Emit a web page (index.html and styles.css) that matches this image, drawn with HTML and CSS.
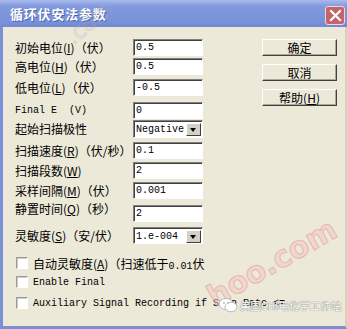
FILE: index.html
```html
<!DOCTYPE html>
<html lang="zh-CN">
<head>
    <meta charset="UTF-8">
    <meta name="viewport" content="width=device-width, initial-scale=1.0">
    <title>循环伏安法参数</title>
    <link rel="stylesheet" href="styles.css">
</head>
<body>
    <div class="window">
        <div class="titlebar">
            <span class="title">循环伏安法参数</span>
            <span class="close">
                <svg width="13" height="13" viewBox="0 0 13 13"><path d="M2 2 L11 11 M11 2 L2 11" stroke="#fff" stroke-width="2.2" stroke-linecap="square"/></svg>
            </span>
        </div>
        <div class="client">
            <div class="top">
                <div class="fields">
                    <span class="label">初始电位(<u>I</u>)（伏）</span>
                    <input class="field" type="text" value="0.5">
                    <span class="label">高电位(<u>H</u>)（伏）</span>
                    <input class="field" type="text" value="0.5">
                    <span class="label">低电位(<u>L</u>)（伏）</span>
                    <input class="field" type="text" value="-0.5">
                    <span class="label mono">Final E  (V)</span>
                    <input class="field" type="text" value="0">
                    <span class="label">起始扫描极性</span>
                    <div class="combo combo-tall"><span class="combo-text">Negative</span><span class="arrow"></span></div>
                    <span class="label">扫描速度(<u>R</u>)（伏/秒）</span>
                    <input class="field" type="text" value="0.1">
                    <span class="label">扫描段数(<u>W</u>)</span>
                    <input class="field" type="text" value="2">
                    <span class="label">采样间隔(<u>M</u>)（伏）</span>
                    <input class="field" type="text" value="0.001">
                    <span class="label label-up">静置时间(<u>Q</u>)（秒）</span>
                    <input class="field" type="text" value="2">
                    <span class="label">灵敏度(<u>S</u>)（安/伏）</span>
                    <div class="combo"><span class="combo-text">1.e-004</span><span class="arrow"></span></div>
                </div>
                <div class="buttons">
                    <button class="btn">确定</button>
                    <button class="btn">取消</button>
                    <button class="btn">帮助(<u>H</u>)</button>
                </div>
            </div>
            <div class="checks">
                <div class="check"><span class="box"></span><span>自动灵敏度(<u>A</u>)（扫速低于<span class="mono">0.01</span>伏</span></div>
                <div class="check"><span class="box"></span><span class="mono">Enable Final</span></div>
                <div class="check check-aux"><span class="box"></span><span class="mono">Auxiliary Signal Recording if Scan Rate &lt;=</span></div>
            </div>
        </div>

        <span class="wm-top">.com</span>
        <span class="wm-site">hoo.com</span>
        <div class="wm-badge">
            <svg width="20" height="17" viewBox="0 0 20 17">
                <ellipse cx="8" cy="7" rx="7" ry="5.5" fill="#fff" stroke="#b9b9b9" stroke-width="1"/>
                <ellipse cx="13" cy="10" rx="6" ry="4.8" fill="#fff" stroke="#b9b9b9" stroke-width="1"/>
                <circle cx="6" cy="6" r="0.9" fill="#b9b9b9"/>
                <circle cx="10" cy="6" r="0.9" fill="#b9b9b9"/>
            </svg>
            <span class="wm-text">美国CHI电化学工作站</span>
        </div>
    </div>
</body>
</html>
```

FILE: styles.css
```css
body { margin: 0; background: #ece9d8; font-family: "Noto Sans CJK SC", sans-serif; font-size: 12px; color: #000; }
.window { position: relative; width: 347px; height: 329px; overflow: hidden; display: flex; flex-direction: column; background: #ece9d8; }

.titlebar { flex: none; height: 27px; display: flex; align-items: center; justify-content: space-between; padding: 0 2px 0 10px;
    background: linear-gradient(#a9bbeb, #8098dc 25%, #7a92d9 80%, #7088d2); }
.title { color: #fff; font-weight: bold; font-size: 13px; line-height: 16px; letter-spacing: 0.8px; text-shadow: 1px 1px #4d62ad; }
.close { width: 18px; height: 17px; margin-top: 4px; display: flex; align-items: center; justify-content: center;
    background: #c4646d; border: 1px solid #efd6da; border-radius: 3px; }

.client { flex: 1; display: flex; flex-direction: column; padding: 12px 0 0 12px;
    border-left: 3px solid #7a90d6; border-bottom: 3px solid #7a90d6; border-right: 2px solid #d6d2c2; }
.top { display: flex; }

.fields { display: grid; grid-template-columns: 118px 70px;
    grid-template-rows: 19px 21px 23px 18px 22px 20px 20px 23px 22px 17px; align-items: start; }
.label { line-height: 17px; white-space: pre; }
.label-up { margin-top: -5px; }
.mono { font-family: "Liberation Mono", monospace; font-size: 10px; }

.field { box-sizing: border-box; width: 70px; height: 17px; margin: 0; padding: 0 2px; background: #fff;
    border: 1px solid; border-color: #808080 #fff #fff #808080; box-shadow: inset 1px 1px #404040;
    font-family: "Liberation Mono", monospace; font-size: 10px; color: #000; outline: none; }

.combo { box-sizing: border-box; width: 70px; height: 17px; display: flex; align-items: center; justify-content: space-between;
    background: #fff; border: 1px solid; border-color: #808080 #fff #fff #808080; box-shadow: inset 1px 1px #404040; padding: 1px 1px 0 2px; }
.combo-tall { height: 18px; }
.combo-text { font-family: "Liberation Mono", monospace; font-size: 10px; }
.arrow { box-sizing: border-box; width: 15px; height: 13px; position: relative; background: #d4d0c8;
    border: 1px solid; border-color: #fff #404040 #404040 #fff; }
.arrow::after { content: ""; position: absolute; left: 3px; top: 4px; border-left: 3.5px solid transparent; border-right: 3.5px solid transparent; border-top: 4px solid #000; }

.buttons { margin-left: 59px; display: flex; flex-direction: column; gap: 8px; }
.btn { box-sizing: border-box; width: 75px; height: 17px; padding: 0; background: #ece9d8; font-family: "Noto Sans CJK SC", sans-serif; font-size: 12px; line-height: 13px;
    border: 1px solid; border-color: #fff #404040 #404040 #fff; box-shadow: inset -1px -1px #aca899; color: #000; }

.checks { margin-top: 13px; padding-left: 1px; display: flex; flex-direction: column; gap: 7px; }
.check { height: 12px; display: flex; align-items: center; gap: 5px; white-space: pre; }
.check-aux { margin-top: 2px; }
.box { box-sizing: border-box; width: 12px; height: 12px; flex: none; background: #fff;
    border: 1px solid; border-color: #9a9a9a #fff #fff #9a9a9a; box-shadow: inset 1px 1px #d0cdc0; }

.wm-site { position: absolute; left: 200px; top: 245px; transform: rotate(-30deg); font-family: "DejaVu Sans", sans-serif; font-weight: bold; font-size: 30px;
    color: rgba(244, 196, 196, 0.5); -webkit-text-stroke: 1px rgba(218, 120, 120, 0.4); pointer-events: none; }
.wm-top { position: absolute; left: 62px; top: 10px; transform: rotate(-40deg); font-family: "DejaVu Sans", sans-serif; font-size: 22px;
    color: transparent; -webkit-text-stroke: 1px rgba(170, 170, 170, 0.35); pointer-events: none; }
.wm-badge { position: absolute; left: 218px; top: 297px; display: flex; align-items: center; gap: 2px; }
.wm-text { font-size: 10.5px; color: #fff; text-shadow: 0 0 1px #777, 0 0 1px #777; }
```
